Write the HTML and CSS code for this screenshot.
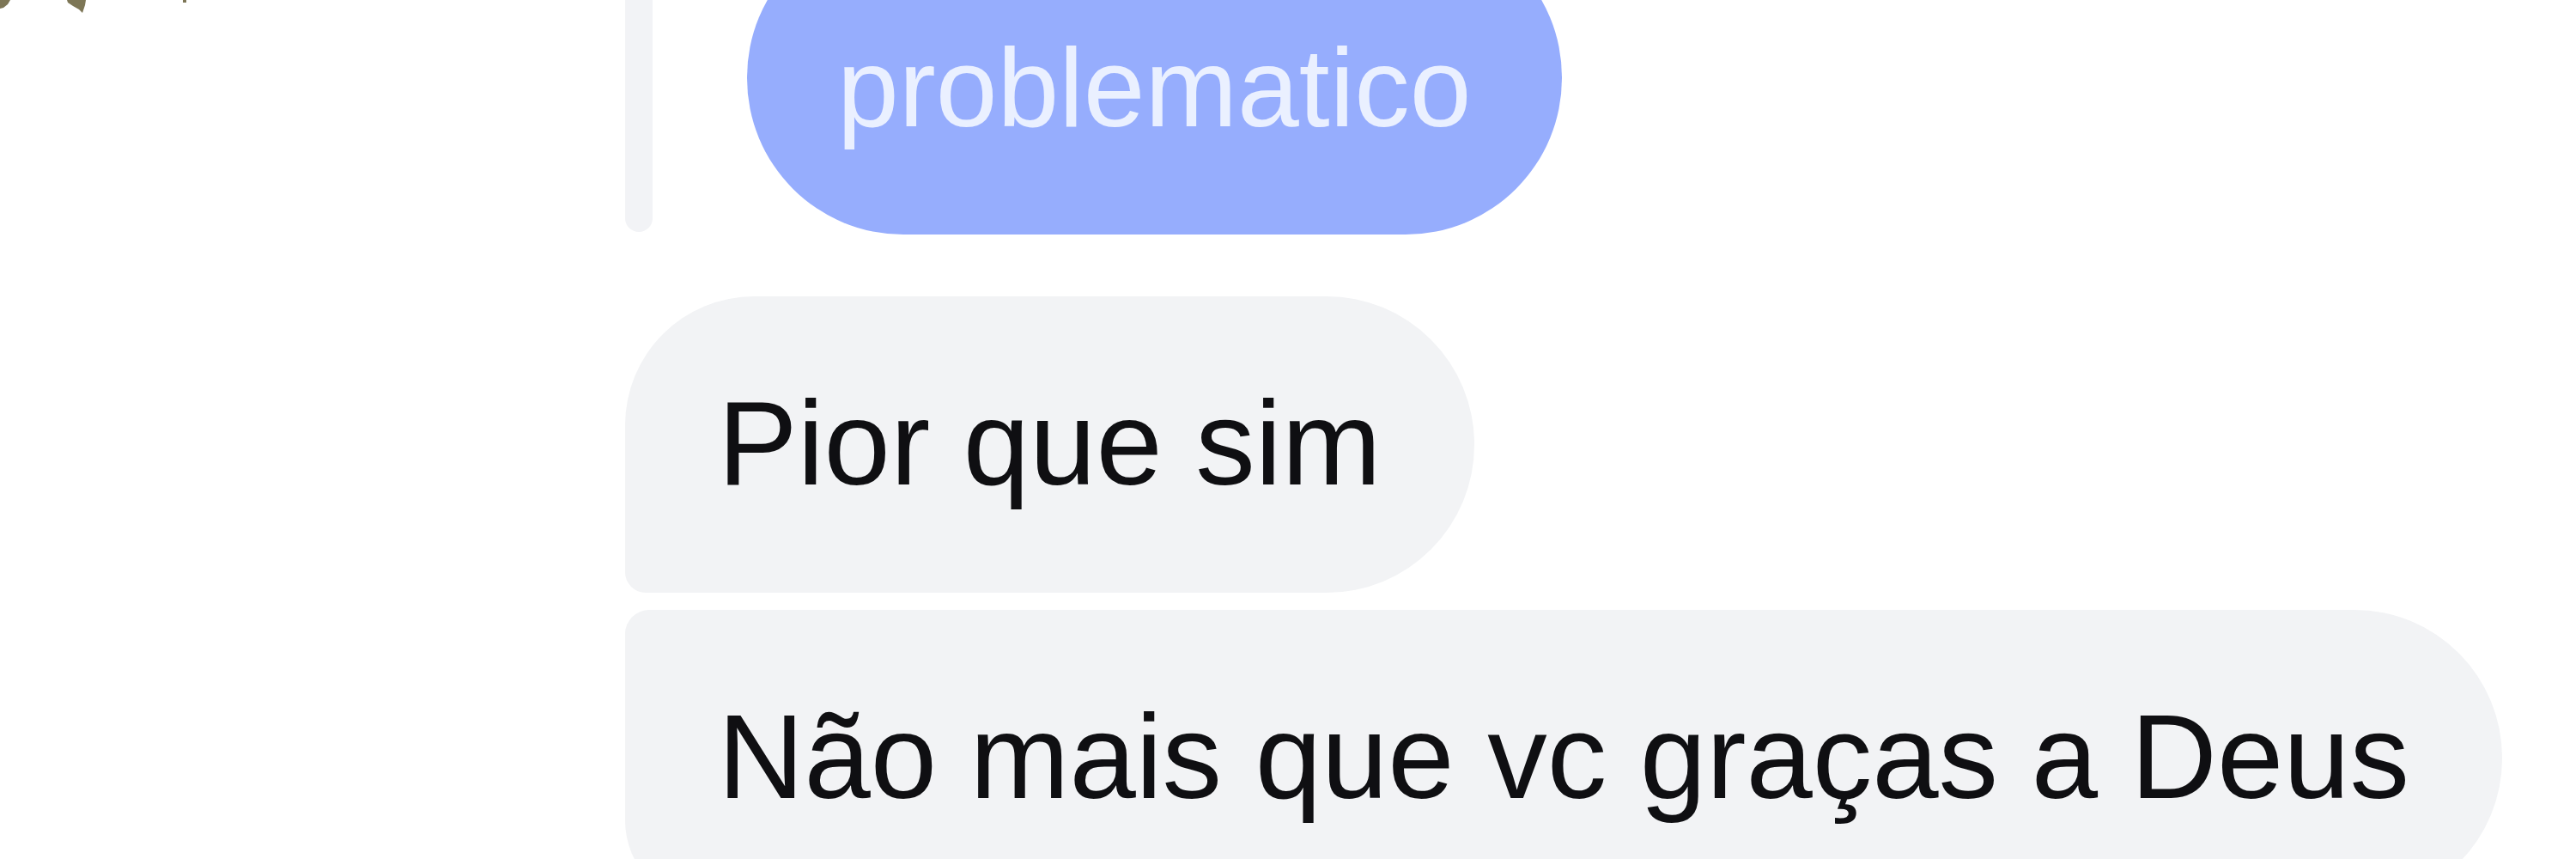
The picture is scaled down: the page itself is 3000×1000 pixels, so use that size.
FILE: index.html
```html
<!DOCTYPE html>
<html lang="pt">
<head>
    <meta charset="UTF-8">
    <title>Conversa</title>
    <link rel="stylesheet" href="styles.css">
</head>
<body>
    <!-- bits of the picture above, cut off by the crop -->
    <svg class="crop-scraps" width="240" height="20" viewBox="0 0 240 20">
        <polygon points="0,0 12,0 9,5 4,9 0,10" fill="#7d7656"/>
        <polygon points="78,0 100,0 99,6 96,15 92,11 85,7 79,3" fill="#7d7656"/>
        <rect x="213" y="0" width="4" height="3" fill="#7d7656"/>
    </svg>

    <div class="thread">
        <!-- quoted message -->
        <div class="reply-quote">
            <div class="quote-bar"></div>
            <div class="quote-bubble">problematico</div>
        </div>

        <!-- received messages -->
        <div class="group">
            <div class="bubble first">Pior que sim</div>
            <div class="bubble last">Não mais que vc graças a Deus</div>
        </div>
    </div>
</body>
</html>
```

FILE: styles.css
```css
/* Global */
body {
    margin: 0;
    padding: 0;
    background: #fff;
    font-family: 'Liberation Sans', Arial, sans-serif;
    color: #0f0f12;
    overflow: hidden;
}

.crop-scraps {
    position: absolute;
    top: 0;
    left: 0;
}

/* Thread */
.thread {
    padding-left: 728px;
}

/* Reply quote */
.reply-quote {
    display: flex;
    align-items: stretch;
    margin-top: -92px;
}

.quote-bar {
    width: 32px;
    margin-bottom: 3px;
    background: #f2f3f6;
    border-radius: 0 0 16px 16px;
}

.quote-bubble {
    margin-left: 110px;
    padding: 117px 105px 93px 105px;
    background: #96adfd;
    color: #eaf0ff;
    font-size: 129px;
    line-height: 155px;
    border-radius: 182px;
    white-space: nowrap;
}

/* Message group */
.group {
    display: flex;
    flex-direction: column;
    align-items: flex-start;
    gap: 20px;
    margin-top: 72px;
}

.bubble {
    padding: 87px 108px 91px 108px;
    background: #f2f3f5;
    font-size: 139px;
    line-height: 167px;
    white-space: nowrap;
}

.bubble.first {
    border-radius: 150px 172px 172px 24px;
}

.bubble.last {
    border-radius: 28px 172px 172px 100px;
}
```
